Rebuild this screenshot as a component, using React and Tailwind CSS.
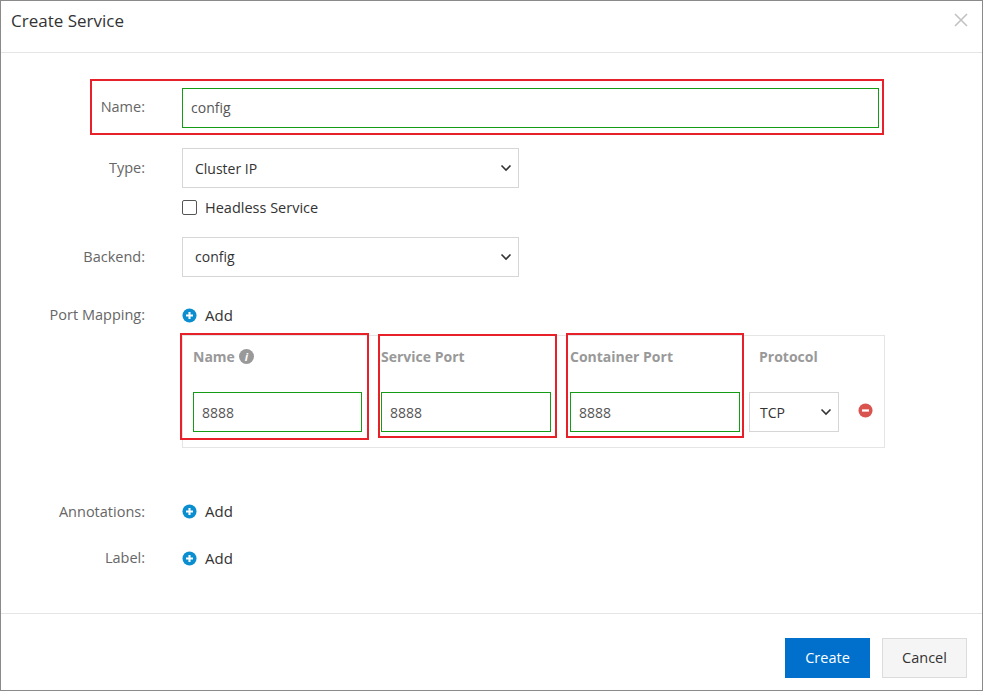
import React from "react";

const font = { fontFamily: '"Open Sans", "Noto Sans", sans-serif' };

const Chevron = () => (
  <svg width="12" height="8" viewBox="0 0 12 8" className="text-[#333]">
    <path d="M1.5 1.5 L6 6 L10.5 1.5" fill="none" stroke="currentColor" strokeWidth="1.6" />
  </svg>
);

const AddIcon = () => (
  <svg width="15" height="15" viewBox="0 0 16 16">
    <circle cx="8" cy="8" r="7.5" fill="#0b8ecf" />
    <path d="M8 4.3v7.4M4.3 8h7.4" stroke="#fff" strokeWidth="2.2" />
  </svg>
);

const AddLink = () => (
  <button type="button" className="flex items-center gap-2 text-[15px] text-[#333]">
    <AddIcon />
    Add
  </button>
);

const FakeSelect = ({ value, width }) => (
  <div
    className={`${width} h-[40px] border border-[#d6d6d6] bg-white flex items-center justify-between pl-3 pr-[6px] text-[14px] text-[#333]`}
  >
    <span>{value}</span>
    <Chevron />
  </div>
);

const Row = ({ label, children, className = "" }) => (
  <div className={`flex items-center ${className}`}>
    <div className="w-[144px] text-right text-[14.5px] text-[#666] shrink-0">{label}</div>
    <div className="ml-[37px]">{children}</div>
  </div>
);

const Column = ({ title, info, redBox, children, className = "" }) => (
  <div className={`relative flex flex-col pt-[10px] ${className}`}>
    {redBox && <div className={`absolute border-2 border-[#e8202a] pointer-events-none ${redBox}`} />}
    <div className="h-[20px] flex items-center gap-[4px] text-[14px] font-bold text-[#999]">
      {title}
      {info && (
        <span className="w-[15px] h-[15px] rounded-full bg-[#999] text-white text-[11px] italic font-bold flex items-center justify-center leading-none">
          i
        </span>
      )}
    </div>
    <div className="mt-[26px]">{children}</div>
  </div>
);

const GreenInput = ({ value, width }) => (
  <input
    readOnly
    value={value}
    className={`${width} h-[40px] border border-[#169b16] px-[8px] text-[14px] text-[#555] outline-none bg-white`}
  />
);

export default function App() {
  return (
    <div style={font} className="w-[983px] h-[691px] border border-[#8a8a8a] bg-white flex flex-col">
      <div className="h-[52px] border-b border-[#e5e5e5] flex items-start justify-between pl-[10px] pr-[13px] pt-[7px] shrink-0">
        <h1 className="text-[17px] leading-[26px] text-[#333]">Create Service</h1>
        <svg width="16" height="16" viewBox="0 0 16 16" className="mt-[4px]">
          <path d="M2 2 L14 14 M14 2 L2 14" stroke="#c2c2c2" strokeWidth="1.6" />
        </svg>
      </div>

      <div className="flex-1 pt-[26px]">
        <div className="ml-[89px] w-[794px] h-[56px] border-2 border-[#e8202a] flex items-center">
          <div className="w-[53px] text-right text-[14.5px] text-[#666]">Name:</div>
          <div className="ml-[37px] pt-[1px]">
            <GreenInput value="config" width="w-[697px]" />
          </div>
        </div>

        <Row label="Type:" className="mt-[13px]">
          <FakeSelect value="Cluster IP" width="w-[337px]" />
        </Row>
        <div className="ml-[181px] mt-[9px] flex items-center gap-[8px] text-[14.5px] text-[#333]">
          <span className="w-[15px] h-[15px] border border-[#555] rounded-[2px] bg-white" />
          Headless Service
        </div>

        <Row label="Backend:" className="mt-[18px]">
          <FakeSelect value="config" width="w-[337px]" />
        </Row>

        <Row label="Port Mapping:" className="mt-[27px]">
          <AddLink />
        </Row>

        <div className="ml-[181px] mt-[9px] w-[703px] h-[113px] border border-[#e5e5e5] flex pl-[10px]">
          <Column title="Name" info redBox="-left-[13px] -top-[3px] w-[189px] h-[107px]">
            <GreenInput value="8888" width="w-[169px]" />
          </Column>
          <Column title="Service Port" className="ml-[19px]" redBox="-left-[3px] -top-[2px] w-[179px] h-[104px]">
            <GreenInput value="8888" width="w-[170px]" />
          </Column>
          <Column title="Container Port" className="ml-[19px]" redBox="-left-[4px] -top-[3px] w-[178px] h-[105px]">
            <GreenInput value="8888" width="w-[170px]" />
          </Column>
          <div className="ml-[9px] flex flex-col pt-[10px]">
            <div className="h-[20px] pl-[10px] flex items-center text-[14px] font-bold text-[#999]">Protocol</div>
            <div className="mt-[26px]">
              <div className="w-[90px] h-[40px] border border-[#d6d6d6] bg-white flex items-center justify-between pl-[10px] pr-[6px] text-[14px] text-[#333]">
                <span>TCP</span>
                <Chevron />
              </div>
            </div>
          </div>
          <div className="ml-[19px] mt-[67px]">
            <svg width="15" height="15" viewBox="0 0 16 16">
              <circle cx="8" cy="8" r="7.5" fill="#d9534f" />
              <path d="M4.3 8h7.4" stroke="#fff" strokeWidth="2.4" />
            </svg>
          </div>
        </div>

        <Row label="Annotations:" className="mt-[52px]">
          <AddLink />
        </Row>
        <Row label="Label:" className="mt-[24px]">
          <AddLink />
        </Row>
      </div>

      <div className="h-[77px] border-t border-[#e5e5e5] flex justify-end items-start pt-[24px] pr-[15px] gap-[12px] shrink-0">
        <button type="button" className="w-[85px] h-[40px] bg-[#0070cc] text-white text-[14.5px]">
          Create
        </button>
        <button type="button" className="w-[85px] h-[40px] bg-[#f5f5f5] border border-[#dcdcdc] text-[#333] text-[14.5px]">
          Cancel
        </button>
      </div>
    </div>
  );
}
